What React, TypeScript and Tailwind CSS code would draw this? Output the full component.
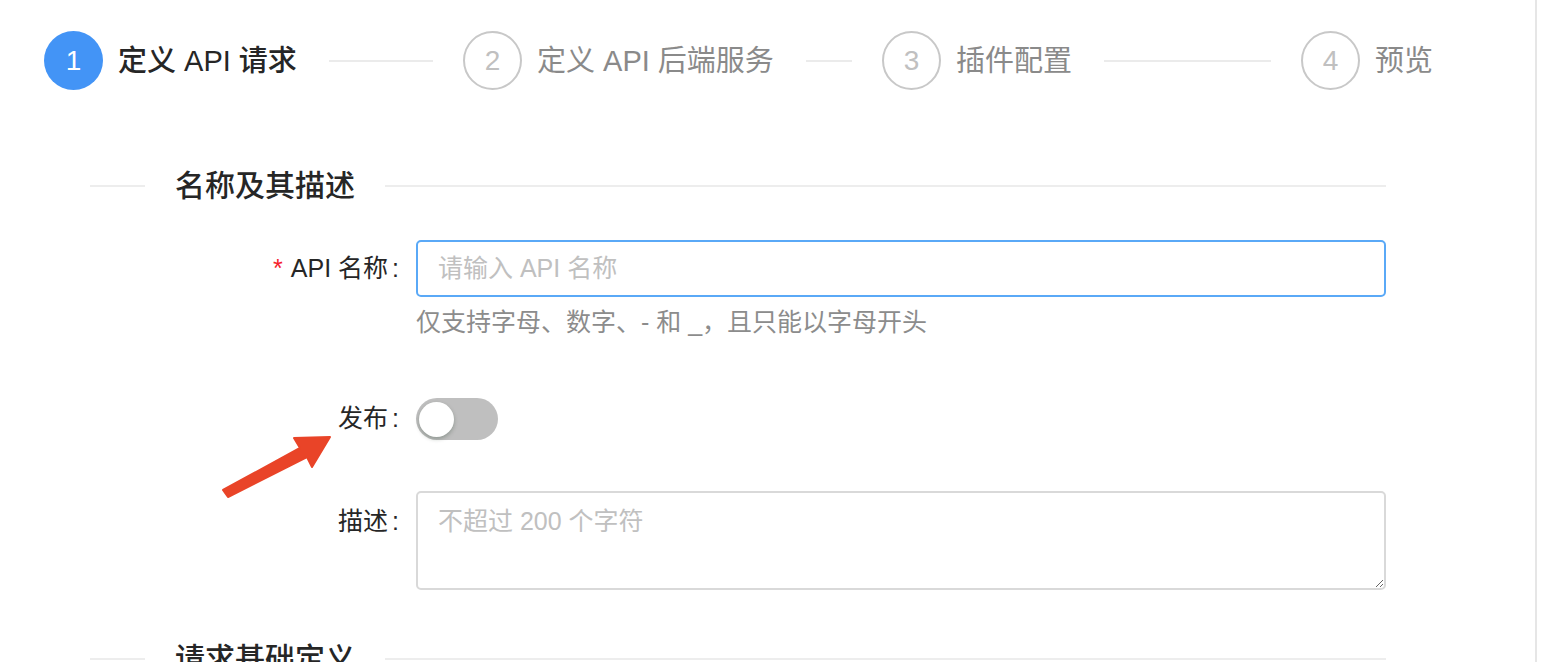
import React from "react";

const FONT = { fontFamily: '"Liberation Sans", "Noto Sans CJK SC", sans-serif' };

function Step({ n, title, active, last }: { n: number; title: string; active?: boolean; last?: boolean }) {
  return (
    <div className={last ? "flex flex-none items-center" : "flex min-w-0 flex-1 items-center overflow-hidden pr-[30px]"}>
      <div
        className={
          active
            ? "flex h-[59px] w-[59px] flex-none items-center justify-center rounded-full bg-[#4394f6] text-[28px] text-white"
            : "flex h-[59px] w-[59px] flex-none items-center justify-center rounded-full border-2 border-[#c8c8c8] text-[28px] text-[#c0c0c0]"
        }
      >
        {n}
      </div>
      <div
        className={
          active
            ? "ml-[15px] flex-none whitespace-nowrap text-[29px] font-medium leading-[40px] text-[#262626]"
            : "ml-[15px] flex-none whitespace-nowrap text-[29px] leading-[40px] text-[#8a8a8a]"
        }
      >
        {title}
      </div>
      {!last && <div className="ml-[32px] h-[2px] min-w-0 flex-1 bg-[#ebebeb]" />}
    </div>
  );
}

function Divider({ title }: { title: string }) {
  return (
    <div className="flex h-[40px] items-center">
      <div className="h-[2px] w-[55px] flex-none bg-[#ededed]" />
      <div className="flex-none px-[30px] text-[30px] font-medium leading-[40px] text-[#262626]">{title}</div>
      <div className="h-[2px] flex-1 bg-[#ededed]" />
    </div>
  );
}

export default function App() {
  return (
    <div className="flex h-[662px] w-[1544px] overflow-hidden bg-white" style={FONT}>
      <div className="relative w-[1537px] flex-none border-r-2 border-[#e6e6e6]">
        <div className="ml-[44px] mt-[31px] flex w-[1389px] items-center">
          <Step n={1} title="定义 API 请求" active />
          <Step n={2} title="定义 API 后端服务" />
          <Step n={3} title="插件配置" />
          <Step n={4} title="预览" last />
        </div>

        <div className="ml-[90px] mt-[76px] w-[1296px]">
          <Divider title="名称及其描述" />

          <div className="mt-[34px] grid grid-cols-[313px_970px] gap-x-[13px]">
            <div className="flex h-[57px] items-center justify-end text-[25px] text-[#262626]">
              <span className="mr-[8px] text-[#f5222d]">*</span>
              <span>API 名称</span>
              <span className="ml-[4px] mr-[4px]">:</span>
            </div>
            <div>
              <input
                className="h-[57px] w-full rounded-[5px] border-2 border-[#5aa9f7] px-[20px] text-[25px] text-[#262626] outline-none placeholder:text-[#c0c0c0]"
                placeholder="请输入 API 名称"
                style={FONT}
              />
              <div className="mt-[7px] text-[25px] leading-[36px] text-[#8c8c8c]">仅支持字母、数字、- 和 _，且只能以字母开头</div>
            </div>
          </div>

          <div className="mt-[58px] grid grid-cols-[313px_970px] gap-x-[13px]">
            <div className="flex h-[42px] items-center justify-end text-[25px] text-[#262626]">
              <span>发布</span>
              <span className="ml-[4px] mr-[4px]">:</span>
            </div>
            <div>
              <div className="flex h-[42px] w-[82px] items-center rounded-full bg-[#bfbfbf] pl-[3px]">
                <div className="h-[35px] w-[35px] rounded-full bg-white shadow-[0_2px_4px_rgba(0,35,11,0.25)]" />
              </div>
            </div>
          </div>

          <div className="mt-[51px] grid grid-cols-[313px_970px] gap-x-[13px]">
            <div className="flex items-start justify-end pt-[12px] text-[25px] leading-[36px] text-[#262626]">
              <span>描述</span>
              <span className="ml-[4px] mr-[4px]">:</span>
            </div>
            <div>
              <textarea
                className="block h-[99px] w-full rounded-[5px] border-2 border-[#d9d9d9] px-[20px] pt-[10px] text-[25px] leading-[36px] text-[#262626] outline-none placeholder:text-[#c0c0c0]"
                placeholder="不超过 200 个字符"
                style={FONT}
              />
            </div>
          </div>

          <div className="mt-[49px]">
            <Divider title="请求基础定义" />
          </div>
        </div>

        <svg
          className="pointer-events-none absolute left-[215px] top-[430px]"
          width="125"
          height="75"
          viewBox="215 430 125 75"
        >
          <polygon
            points="223,490 300,448 294,438 330,437 312,467 307,457 228,497"
            fill="#e94428"
            stroke="#e94428"
            strokeWidth="2"
            strokeLinejoin="round"
          />
        </svg>
      </div>
    </div>
  );
}
